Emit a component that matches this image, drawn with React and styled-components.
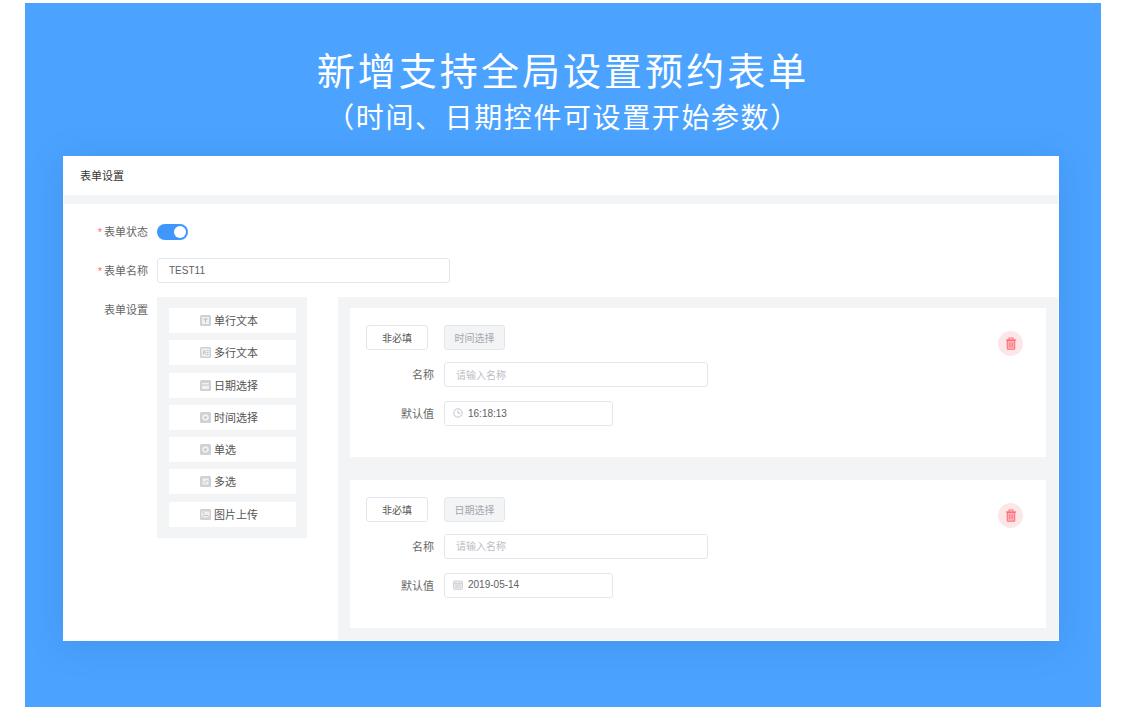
import React from "react";
import { styled, createGlobalStyle } from "styled-components";

const GlobalStyle = createGlobalStyle`
  * {
    box-sizing: border-box;
  }
  html, body {
    margin: 0;
    background: #fff;
    font-family: "Liberation Sans", "Noto Sans CJK SC", sans-serif;
  }
`;

const Page = styled.div`
  height: 707px;
  overflow: hidden;
  padding: 3px 25px 0;
`;

const Banner = styled.main`
  height: 704px;
  background: #4ba3ff;
  padding: 0 42px 0 38px;
`;

const Heading = styled.header`
  height: 153px;
  padding: 40px 0 0 4px;
  color: #fff;
  text-align: center;
  font-family: "Noto Sans CJK SC", sans-serif;
  h1 {
    margin: 0;
    font-size: 38px;
    line-height: 52px;
    font-weight: 400;
    letter-spacing: 3.05px;
  }
  p {
    margin: 0;
    font-size: 28px;
    line-height: 42px;
    font-weight: 400;
    letter-spacing: 1.6px;
  }
`;

const Card = styled.section`
  width: 996px;
  height: 485px;
  background: #fff;
  border: 1px solid #fff;
  box-shadow: 0 4px 32px rgba(20, 80, 150, 0.18);
  display: flex;
  flex-direction: column;
`;

const CardTitle = styled.div`
  height: 38px;
  padding: 0 0 2px 16px;
  display: flex;
  align-items: center;
  font-size: 11px;
  color: #333;
`;

const Strip = styled.div`
  height: 9px;
  background: #f3f4f6;
`;

const FormTop = styled.div`
  padding-top: 19px;
  display: flex;
  flex-direction: column;
  gap: 18px;
`;

const Row = styled.div`
  display: flex;
  align-items: center;
  height: ${({ $h }) => $h}px;
`;

const Label = styled.label`
  width: 84px;
  flex: none;
  padding-bottom: 2px;
  text-align: right;
  font-size: 11px;
  color: #666;
  em {
    color: #ff6b72;
    font-style: normal;
    margin-right: 2px;
  }
`;

const Switch = styled.div`
  width: 31px;
  height: 16px;
  margin-left: 9px;
  border-radius: 8px;
  background: #3f97fb;
  display: flex;
  justify-content: flex-end;
  align-items: center;
  padding-right: 2px;
  &::after {
    content: "";
    width: 12px;
    height: 12px;
    border-radius: 50%;
    background: #fff;
  }
`;

const Field = styled.div`
  width: ${({ $w }) => $w}px;
  height: 25px;
  margin-left: ${({ $ml }) => $ml || 0}px;
  flex: none;
  border: 1px solid #e4e6ee;
  border-radius: 3px;
  background: #fff;
  display: flex;
  align-items: center;
  gap: 5px;
  padding-left: ${({ $pl }) => $pl || 11}px;
  padding-bottom: 1px;
  font-size: 10px;
  color: ${({ $muted }) => ($muted ? "#bbbec6" : "#606266")};
`;

const Settings = styled.div`
  flex: 1;
  margin-top: 14px;
  display: flex;
  align-items: stretch;
`;

const SettingsLabel = styled(Label)`
  padding-top: 6px;
  line-height: 14px;
`;

const Palette = styled.div`
  width: 150px;
  height: 241px;
  margin-left: 9px;
  flex: none;
  background: #f3f4f6;
  padding: 11px 11px 0 12px;
  display: flex;
  flex-direction: column;
  gap: 7.3px;
`;

const PaletteItem = styled.div`
  height: 25px;
  background: #fff;
  display: flex;
  align-items: center;
  padding-left: 31px;
  gap: 3px;
  font-size: 11px;
  color: #555;
`;

const PaletteName = styled.span`
  padding-bottom: 1px;
`;

const Glyph = styled.svg`
  width: 11px;
  height: 11px;
  flex: none;
`;

const Fields = styled.div`
  flex: 1;
  margin-left: 31px;
  background: #f3f4f6;
  padding: 11px 12px 12px 12px;
  display: flex;
  flex-direction: column;
  gap: 23px;
`;

const FieldCard = styled.article`
  flex: 1;
  background: #fff;
  padding: 17px 23px 0 16px;
  display: flex;
  justify-content: space-between;
  align-items: flex-start;
`;

const FieldForm = styled.div`
  display: flex;
  flex-direction: column;
  gap: 12px;
`;

const ButtonRow = styled.div`
  display: flex;
  gap: 16px;
`;

const Btn = styled.div`
  width: ${({ $w }) => $w}px;
  height: 25px;
  border: 1px solid ${({ $disabled }) => ($disabled ? "#e4e6ea" : "#e4e6ee")};
  border-radius: 3px;
  display: flex;
  align-items: center;
  justify-content: center;
  font-size: 10px;
  background: ${({ $disabled }) => ($disabled ? "#f3f4f6" : "#fff")};
  color: ${({ $disabled }) => ($disabled ? "#a4a7ad" : "#555")};
`;

const FieldRow = styled.div`
  display: flex;
  align-items: center;
  margin-top: ${({ $mt }) => $mt || 0}px;
`;

const FieldLabel = styled.span`
  width: 68px;
  text-align: right;
  margin-right: 10px;
  padding-bottom: 1px;
  font-size: 11px;
  color: #666;
`;

const TrashButton = styled.button`
  width: 25px;
  height: 25px;
  margin-top: 6px;
  padding: 0;
  border: 0;
  border-radius: 50%;
  background: #fde6e8;
  display: flex;
  align-items: center;
  justify-content: center;
`;

const GlyphBase = ({ children }) => (
  <Glyph viewBox="0 0 11 11">
    <rect width="11" height="11" rx="1.5" fill="#cfd1d4" />
    {children}
  </Glyph>
);

const icons = {
  text: (
    <GlyphBase>
      <rect x="2" y="2" width="7" height="7" fill="#f1f1f2" />
      <path d="M3.5 4h4M5.5 4v3.5" stroke="#b5b7bb" strokeWidth="1" fill="none" />
    </GlyphBase>
  ),
  multi: (
    <GlyphBase>
      <rect x="1.5" y="1.5" width="8" height="8" fill="#f1f1f2" />
      <path d="M3 7.5 4.3 3.5 5.5 7.5M6.5 3.5H8.5M6.5 5.5H8.5M6.5 7.5H8.5" stroke="#b0b2b6" strokeWidth=".8" fill="none" />
    </GlyphBase>
  ),
  date: (
    <GlyphBase>
      <rect x="2" y="3" width="7" height="6" fill="#f1f1f2" />
      <path d="M2 5h7" stroke="#c2c4c8" strokeWidth="1" />
    </GlyphBase>
  ),
  time: (
    <GlyphBase>
      <circle cx="5.5" cy="5.5" r="3.2" fill="#f1f1f2" />
      <circle cx="5.5" cy="5.5" r="1.3" fill="#c2c4c8" />
    </GlyphBase>
  ),
  radio: (
    <GlyphBase>
      <circle cx="5.5" cy="5.5" r="3.2" fill="#f1f1f2" />
      <circle cx="5.5" cy="5.5" r="1.5" fill="#c8cacd" />
    </GlyphBase>
  ),
  check: (
    <GlyphBase>
      <rect x="2.5" y="2.5" width="6" height="6" fill="#f1f1f2" />
      <path d="M3.8 5.5 5.1 6.8 7.4 4" stroke="#b5b7bb" strokeWidth=".9" fill="none" />
    </GlyphBase>
  ),
  image: (
    <GlyphBase>
      <rect x="1.5" y="2.5" width="8" height="6" fill="#f1f1f2" />
      <path d="M2.5 8 4.5 5.5 6 7 7.2 6 8.8 8" stroke="#b5b7bb" strokeWidth=".8" fill="none" />
      <circle cx="3.6" cy="4" r=".7" fill="#b5b7bb" />
    </GlyphBase>
  ),
};

const ClockIcon = () => (
  <svg width="10" height="10" viewBox="0 0 10 10" fill="none" stroke="#c0c4cc" strokeWidth="1">
    <circle cx="5" cy="5" r="4.2" />
    <path d="M5 2.6V5.2H7.2" />
  </svg>
);

const CalendarIcon = () => (
  <svg width="10" height="10" viewBox="0 0 10 10" fill="none">
    <rect x=".5" y="1" width="9" height="8.5" rx="1" fill="#e9eaec" stroke="#c8cbd1" strokeWidth=".8" />
    <path d="M.5 3.4h9M2 5.2h6M2 7.2h6" stroke="#c8cbd1" strokeWidth=".8" />
  </svg>
);

const TrashIcon = () => (
  <svg width="12" height="13" viewBox="0 0 12 13" fill="none">
    <path d="M1 3h10" stroke="#ff6f7a" strokeWidth="1.3" />
    <path d="M4 2.8V1h4v1.8" stroke="#ff6f7a" strokeWidth="1.1" />
    <path d="M2.3 3.5h7.4v8a.8.8 0 0 1-.8.8H3.1a.8.8 0 0 1-.8-.8z" fill="#ffb0b6" stroke="#ff6f7a" strokeWidth="1.1" />
    <path d="M4.8 5.5v4.5M7.2 5.5v4.5" stroke="#ff6f7a" strokeWidth="1" />
  </svg>
);

const paletteItems = [
  { name: "单行文本", icon: "text" },
  { name: "多行文本", icon: "multi" },
  { name: "日期选择", icon: "date" },
  { name: "时间选择", icon: "time" },
  { name: "单选", icon: "radio" },
  { name: "多选", icon: "check" },
  { name: "图片上传", icon: "image" },
];

const fieldCards = [
  { type: "时间选择", value: "16:18:13", icon: <ClockIcon /> },
  { type: "日期选择", value: "2019-05-14", icon: <CalendarIcon /> },
];

export default function App() {
  return (
    <Page>
      <GlobalStyle />
      <Banner>
        <Heading>
          <h1>新增支持全局设置预约表单</h1>
          <p>（时间、日期控件可设置开始参数）</p>
        </Heading>
        <Card>
          <CardTitle>表单设置</CardTitle>
          <Strip />
          <FormTop>
            <Row $h={17}>
              <Label><em>*</em>表单状态</Label>
              <Switch />
            </Row>
            <Row $h={25}>
              <Label><em>*</em>表单名称</Label>
              <Field $w={293} $ml={9}>TEST11</Field>
            </Row>
          </FormTop>
          <Settings>
            <SettingsLabel>表单设置</SettingsLabel>
            <Palette>
              {paletteItems.map((item) => (
                <PaletteItem key={item.name}>
                  {icons[item.icon]}
                  <PaletteName>{item.name}</PaletteName>
                </PaletteItem>
              ))}
            </Palette>
            <Fields>
              {fieldCards.map((card) => (
                <FieldCard key={card.type}>
                  <FieldForm>
                    <ButtonRow>
                      <Btn $w={62}>非必填</Btn>
                      <Btn $w={61} $disabled>{card.type}</Btn>
                    </ButtonRow>
                    <FieldRow>
                      <FieldLabel>名称</FieldLabel>
                      <Field $w={264} $muted>请输入名称</Field>
                    </FieldRow>
                    <FieldRow $mt={2}>
                      <FieldLabel>默认值</FieldLabel>
                      <Field $w={169} $pl={8}>
                        {card.icon}
                        {card.value}
                      </Field>
                    </FieldRow>
                  </FieldForm>
                  <TrashButton aria-label="删除">
                    <TrashIcon />
                  </TrashButton>
                </FieldCard>
              ))}
            </Fields>
          </Settings>
        </Card>
      </Banner>
    </Page>
  );
}
